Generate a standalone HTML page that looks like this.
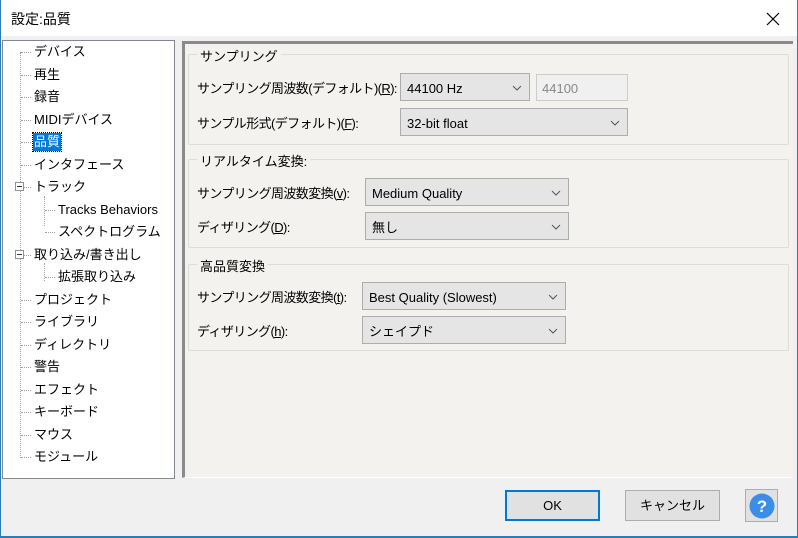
<!DOCTYPE html>
<html><head><meta charset="utf-8"><style>
*{margin:0;padding:0;box-sizing:border-box}
body{width:798px;height:538px;background:#f0f0f0;font-family:"Liberation Sans","Noto Sans CJK JP",sans-serif;font-size:13px;color:#000;position:relative;overflow:hidden}
.a{position:absolute;white-space:nowrap}
.lb{letter-spacing:-0.6px}
#title{left:0;top:0;width:798px;height:36px;background:#fff}
#tree{left:2px;top:40px;width:173px;height:439px;background:#fff;border:1px solid #828790}
.ti{position:absolute;left:31px;height:18px;line-height:18px}
.ci{left:55px}
.dh{position:absolute;height:0;border-top:1px dotted #a0a0a0}
.dv{position:absolute;width:0;border-left:1px dotted #a0a0a0}
.pm{position:absolute;width:9px;height:9px;border:1px solid #919191;background:#fff;left:12px}
.pm:after{content:"";position:absolute;left:1px;top:3px;width:5px;height:1px;background:#333}
#panel{left:182px;top:41px;width:611px;height:437px;background:#f3f2ef;border-top:3px solid #8a8a8a;border-left:3px solid #8a8a8a;border-bottom:1px solid #fff}
.grp{position:absolute;border:1px solid #dcdcdc;border-radius:2px}
.gl{position:absolute;top:-9px;left:8px;background:#f3f2ef;padding:0 3px}
.cb{position:absolute;background:#e5e5e5;border:1px solid #adadad;height:28px;line-height:29px;padding-left:6px}
.cb svg{position:absolute;right:7px;top:11px}
.btn{position:absolute;background:#e1e1e1;border:1px solid #adadad;text-align:center;line-height:29px}
u{text-decoration:underline}
</style></head><body>
<div class="a" id="title"></div>
<div class="a" style="left:11px;top:9px;font-size:14px">設定:品質</div>
<svg class="a" style="left:766px;top:12px" width="14" height="14"><path d="M1 1L13 13M13 1L1 13" stroke="#000" stroke-width="1.2"/></svg>

<div class="a" id="tree">
<div class="dv" style="left:17px;top:11px;height:406px"></div>
<div class="dv" style="left:41px;top:155px;height:30px"></div>
<div class="dv" style="left:41px;top:222px;height:18px"></div>
<div class="dh" style="left:18px;top:11px;width:10px"></div>
<div class="dh" style="left:18px;top:34px;width:10px"></div>
<div class="dh" style="left:18px;top:56px;width:10px"></div>
<div class="dh" style="left:18px;top:79px;width:10px"></div>
<div class="dh" style="left:18px;top:101px;width:10px"></div>
<div class="dh" style="left:18px;top:124px;width:10px"></div>
<div class="dh" style="left:21px;top:146px;width:7px"></div>
<div class="dh" style="left:42px;top:169px;width:10px"></div>
<div class="dh" style="left:42px;top:191px;width:10px"></div>
<div class="dh" style="left:21px;top:214px;width:7px"></div>
<div class="dh" style="left:42px;top:236px;width:10px"></div>
<div class="dh" style="left:18px;top:259px;width:10px"></div>
<div class="dh" style="left:18px;top:281px;width:10px"></div>
<div class="dh" style="left:18px;top:304px;width:10px"></div>
<div class="dh" style="left:18px;top:326px;width:10px"></div>
<div class="dh" style="left:18px;top:349px;width:10px"></div>
<div class="dh" style="left:18px;top:371px;width:10px"></div>
<div class="dh" style="left:18px;top:394px;width:10px"></div>
<div class="dh" style="left:18px;top:416px;width:10px"></div>
<div class="pm" style="top:141px"></div>
<div class="pm" style="top:209px"></div>
<div class="ti" style="top:2px">デバイス</div>
<div class="ti" style="top:25px">再生</div>
<div class="ti" style="top:47px">録音</div>
<div class="ti" style="top:70px">MIDIデバイス</div>
<div class="ti" style="top:92px;left:30px;background:#0078d7;color:#fff;padding:0 1px;outline:1px dotted #000">品質</div>
<div class="ti" style="top:115px">インタフェース</div>
<div class="ti" style="top:137px">トラック</div>
<div class="ti ci" style="top:160px">Tracks Behaviors</div>
<div class="ti ci" style="top:182px">スペクトログラム</div>
<div class="ti" style="top:205px">取り込み/書き出し</div>
<div class="ti ci" style="top:227px">拡張取り込み</div>
<div class="ti" style="top:250px">プロジェクト</div>
<div class="ti" style="top:272px">ライブラリ</div>
<div class="ti" style="top:295px">ディレクトリ</div>
<div class="ti" style="top:317px">警告</div>
<div class="ti" style="top:340px">エフェクト</div>
<div class="ti" style="top:362px">キーボード</div>
<div class="ti" style="top:385px">マウス</div>
<div class="ti" style="top:407px">モジュール</div>
</div>

<div class="a" id="panel"></div>
<div class="grp" style="left:188px;top:54px;width:601px;height:91px"><span class="gl">サンプリング</span></div>
<div class="grp" style="left:188px;top:159px;width:601px;height:89px"><span class="gl">リアルタイム変換:</span></div>
<div class="grp" style="left:188px;top:264px;width:601px;height:87px"><span class="gl">高品質変換</span></div>

<div class="a lb" style="left:197px;top:78px">サンプリング周波数(デフォルト)(<u>R</u>):</div>
<div class="cb" style="left:400px;top:73px;width:130px">44100 Hz<svg width="10" height="6"><path d="M1 1L5 5L9 1" stroke="#555" fill="none"/></svg></div>
<div class="a" style="left:536px;top:74px;width:92px;height:27px;border:1px solid #ccc;background:#f0f0f0;color:#888;line-height:27px;padding-left:5px">44100</div>
<div class="a lb" style="left:197px;top:113px">サンプル形式(デフォルト)(<u>F</u>):</div>
<div class="cb" style="left:400px;top:108px;width:228px">32-bit float<svg width="10" height="6"><path d="M1 1L5 5L9 1" stroke="#555" fill="none"/></svg></div>

<div class="a lb" style="left:197px;top:183px">サンプリング周波数変換(<u>v</u>):</div>
<div class="cb" style="left:365px;top:178px;width:204px">Medium Quality<svg width="10" height="6"><path d="M1 1L5 5L9 1" stroke="#555" fill="none"/></svg></div>
<div class="a lb" style="left:197px;top:217px">ディザリング(<u>D</u>):</div>
<div class="cb" style="left:365px;top:212px;width:204px">無し<svg width="10" height="6"><path d="M1 1L5 5L9 1" stroke="#555" fill="none"/></svg></div>

<div class="a lb" style="left:197px;top:287px">サンプリング周波数変換(<u>t</u>):</div>
<div class="cb" style="left:362px;top:282px;width:204px">Best Quality (Slowest)<svg width="10" height="6"><path d="M1 1L5 5L9 1" stroke="#555" fill="none"/></svg></div>
<div class="a lb" style="left:197px;top:321px">ディザリング(<u>h</u>):</div>
<div class="cb" style="left:362px;top:316px;width:204px">シェイプド<svg width="10" height="6"><path d="M1 1L5 5L9 1" stroke="#555" fill="none"/></svg></div>

<div class="btn" style="left:505px;top:490px;width:95px;height:31px;border:2px solid #0078d7;line-height:27px">OK</div>
<div class="btn" style="left:625px;top:490px;width:95px;height:31px">キャンセル</div>
<div class="btn" style="left:745px;top:489px;width:33px;height:33px"><svg width="26" height="26" style="position:absolute;left:3px;top:3px"><circle cx="13" cy="13" r="12.5" fill="#3b8ee8"/><text x="13" y="19" font-family="Liberation Sans" font-size="17" font-weight="bold" fill="#fff" text-anchor="middle">?</text></svg></div>
<div class="a" style="left:0;top:536px;width:798px;height:2px;background:#2b7db8"></div>
<div class="a" style="left:797px;top:0;width:1px;height:538px;background:#2b7db8"></div>
<div class="a" style="left:0;top:0;width:1px;height:538px;background:#2b7db8"></div>
</body></html>
